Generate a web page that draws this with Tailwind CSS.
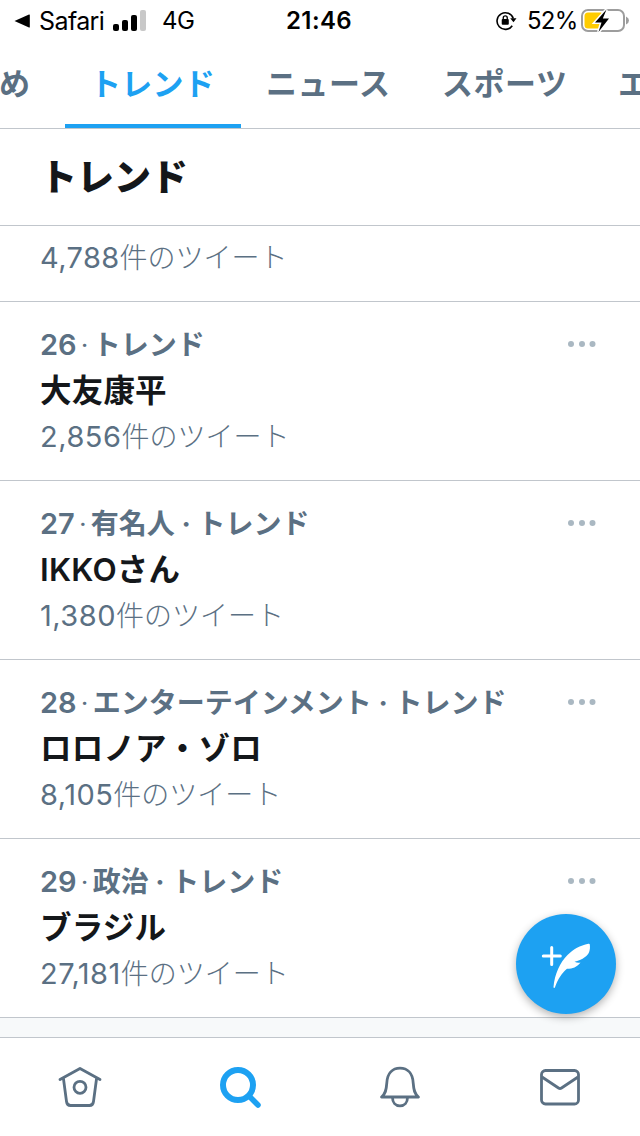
<!DOCTYPE html>
<html lang="ja">
    <head>
        <title>トレンド</title>
        <meta charset="utf-8">
        <meta name="viewport" content="width=device-width, initial-scale=1">
        <script src="https://cdn.jsdelivr.net/npm/@tailwindcss/browser@4"></script>
    </head>
    <body class="bg-white font-['Inter','Noto_Sans_CJK_JP',sans-serif] text-[#5b7083]">
        <div class="relative flex flex-col w-[640px] h-[1136px] overflow-hidden">
            <!-- Status bar -->
            <div class="flex items-center h-10 pt-px shrink-0 text-black text-[25px] leading-10">
                <svg class="ml-[14px] w-4 h-4" viewBox="0 0 16 16"><path d="M.5 8 15 1.5q.8-.2.8.6v11.8q0 .8-.8.6z" /></svg>
                <span class="ml-[9px] w-[74px] tracking-[-0.6px]">Safari</span>
                <svg class="w-[33px] h-[22px]" viewBox="0 0 33 22">
                    <rect x="0" y="14" width="6" height="7" rx="2" />
                    <rect x="9" y="10" width="6" height="11" rx="2" />
                    <rect x="18" y="5" width="6" height="16" rx="2" />
                    <rect x="27" y="0" width="6" height="21" rx="2" fill="#c8c8c8" />
                </svg>
                <span class="ml-4 w-[124px] text-2xl leading-10 tracking-[-0.5px]">4G</span>
                <span class="w-[210px] text-2xl leading-10 font-semibold tracking-[0.4px]">21:46</span>
                <svg class="w-[21px] h-[21px]" viewBox="0 0 22 22">
                    <path d="M17 16.5A8.7 8.7 0 1 1 18.1 9" fill="none" stroke="#000" stroke-width="1.7" />
                    <path d="M14.9 8.6h6.6l-3.2 4.3z" />
                    <rect x="6" y="9.5" width="7.4" height="6" rx="1" />
                    <path d="M7.6 10V8.3a2.1 2.1 0 0 1 4.2 0V10" fill="none" stroke="#000" stroke-width="1.4" />
                </svg>
                <span class="ml-[10px] w-[53px] text-2xl leading-10 tracking-[-0.8px]">52%</span>
                <svg class="w-[50px] h-7" viewBox="0 0 50 28">
                    <rect x="2" y="3" width="42" height="21" rx="6" fill="none" stroke="#9d9d9d" stroke-width="2" />
                    <path d="M46 9.500q3 1.500 3 4t-3 4z" fill="#9d9d9d" />
                    <rect x="4.500" y="5.500" width="19" height="16" rx="3.500" fill="#ffcc00" />
                    <path d="M26.500 2.500 15 15.500h6.500L18.500 25 29 11.500h-6.200z" stroke="#fff" stroke-width="3" />
                    <path d="M26.500 2.500 15 15.500h6.500L18.500 25 29 11.500h-6.200z" />
                </svg>
            </div>

            <!-- Category tabs -->
            <nav class="flex shrink-0 h-[89px] border-b border-[#c1c6cc] text-[31px] leading-[87px] font-bold whitespace-nowrap">
                <div class="flex justify-end shrink-0 w-[65px] pr-[35px]">め</div>
                <div class="shrink-0 w-44 h-[88px] px-[25px] border-b-4 border-[#1da1f2] text-[#1da1f2] tracking-[0.3px]">トレンド</div>
                <div class="shrink-0 w-44 px-[25px] tracking-[0.5px]">ニュース</div>
                <div class="shrink-0 w-44 px-[25px] tracking-[0.5px]">スポーツ</div>
                <div class="shrink-0 px-[25px]">エンタメ</div>
            </nav>

            <h1 class="shrink-0 h-[97px] border-b border-[#c1c6cc] pl-10 text-[37px] leading-[98px] font-black text-[#14171a]">トレンド</h1>

            <main id="trends">
                <div class="flex h-[76px] border-b border-[#c1c6cc] pl-10 text-[28px] leading-[63px]">
                    <span class="text-[29px] tracking-[0.4px]">4,788</span>
                    <span class="pt-px font-light">件のツイート</span>
                </div>
            </main>

            <div class="flex-1 bg-[#f7f9fa]"></div>

            <!-- Bottom navigation -->
            <nav class="grid grid-cols-4 shrink-0 h-[99px] border-t border-[#c1c6cc] bg-white">
                <div class="flex justify-center pt-[26px]">
                    <svg class="w-12 h-12" viewBox="0 0 48 48" fill="none" stroke="#5b7083" stroke-width="2.800" stroke-linecap="round" stroke-linejoin="round">
                        <path d="M4 15.500 24 4.500l20 11M7.500 15l3 22.500q.5 4 4 4h19q3.500 0 4-4l3-22.500" />
                        <circle cx="24" cy="23.300" r="6" />
                    </svg>
                </div>
                <div class="flex justify-center pt-[26px]">
                    <svg class="w-12 h-12" viewBox="0 0 48 48" fill="none" stroke="#1da1f2" stroke-linecap="round">
                        <circle cx="22" cy="21" r="15" stroke-width="6" />
                        <path d="m33 32 9 9" stroke-width="5.500" />
                    </svg>
                </div>
                <div class="flex justify-center pt-[26px]">
                    <svg class="w-12 h-12" viewBox="0 0 48 48" fill="none" stroke="#5b7083" stroke-width="2.800" stroke-linejoin="round">
                        <path d="M5.500 33c4-3 4.800-7 5.300-14C11.300 9.500 16.500 4.200 24 4.200s12.700 5.300 13.200 14.800c.5 7 1.300 11 5.300 14z" />
                        <path d="M16.500 33.500c0 5 3 8.300 7.500 8.300s7.500-3.300 7.500-8.300" />
                    </svg>
                </div>
                <div class="flex justify-center pt-[26px]">
                    <svg class="w-12 h-12" viewBox="0 0 48 48" fill="none" stroke="#5b7083" stroke-width="2.800" stroke-linejoin="round">
                        <rect x="5.500" y="6.500" width="37" height="33.500" rx="4" />
                        <path d="m6 13 16.500 11q1.500 1 3 0L42 13" />
                    </svg>
                </div>
            </nav>

            <!-- Compose button -->
            <button class="absolute left-[516px] top-[914px] w-[100px] h-[100px] rounded-full bg-[#1da1f2] shadow-[0_3px_8px_rgba(0,0,0,0.3)]">
                <svg class="w-[100px] h-[100px]" viewBox="0 0 100 100">
                    <path d="M35.700 33.500v17M27.300 42h17" stroke="#fff" stroke-width="3" stroke-linecap="round" />
                    <path d="M73.800 30.500c.7 5.500-.8 10.200-4.800 12.500-3 2.400-7 4-10.500 4.700 2 1 4 1.200 6 .8-4 4.800-7.500 6.300-13.500 6.300-5.500 4.500-9 10.500-12 18.500-.4 1-1.600.8-1.500-.2 1.200-13 6.500-24.500 14-32 6-6 12.500-9.500 20.900-11.300q1.200-.3 1.400.7z" fill="#fff" />
                </svg>
            </button>
        </div>

        <script>
            const trends = [
                { rank: 26, category: 'トレンド', name: '大友康平', tweets: '2,856' },
                { rank: 27, category: '有名人 · トレンド', name: 'IKKOさん', tweets: '1,380' },
                { rank: 28, category: 'エンターテインメント · トレンド', name: 'ロロノア・ゾロ', tweets: '8,105' },
                { rank: 29, category: '政治 · トレンド', name: 'ブラジル', tweets: '27,181' },
            ];

            document.getElementById('trends').insertAdjacentHTML('beforeend', trends.map(trend => `
                <div class="h-[179px] border-b border-[#c1c6cc] pl-10 pr-11 pt-[19px] whitespace-nowrap">
                    <div class="flex items-center justify-between h-[46px]">
                        <div class="flex items-center pt-[2px] text-[28px] leading-[46px] font-bold">
                            <span class="text-[29px] font-semibold">${trend.rank}</span>
                            <span class="w-4 text-center text-xl leading-[46px]">·</span>
                            <span>${trend.category}</span>
                        </div>
                        <svg class="w-7 h-[6px] fill-[#aab8c2]" viewBox="0 0 28 6"><circle cx="3" cy="3" r="3" /><circle cx="14" cy="3" r="3" /><circle cx="24.500" cy="3" r="3" /></svg>
                    </div>
                    <div class="mt-px text-[31.5px] leading-[46px] font-semibold tracking-[0.2px] text-[#14171a]">${trend.name}</div>
                    <div class="flex text-[28px] leading-[46px]">
                        <span class="text-[29px] tracking-[0.5px]">${trend.tweets}</span>
                        <span class="font-light">件のツイート</span>
                    </div>
                </div>
            `).join(''));
        </script>
    </body>
</html>
